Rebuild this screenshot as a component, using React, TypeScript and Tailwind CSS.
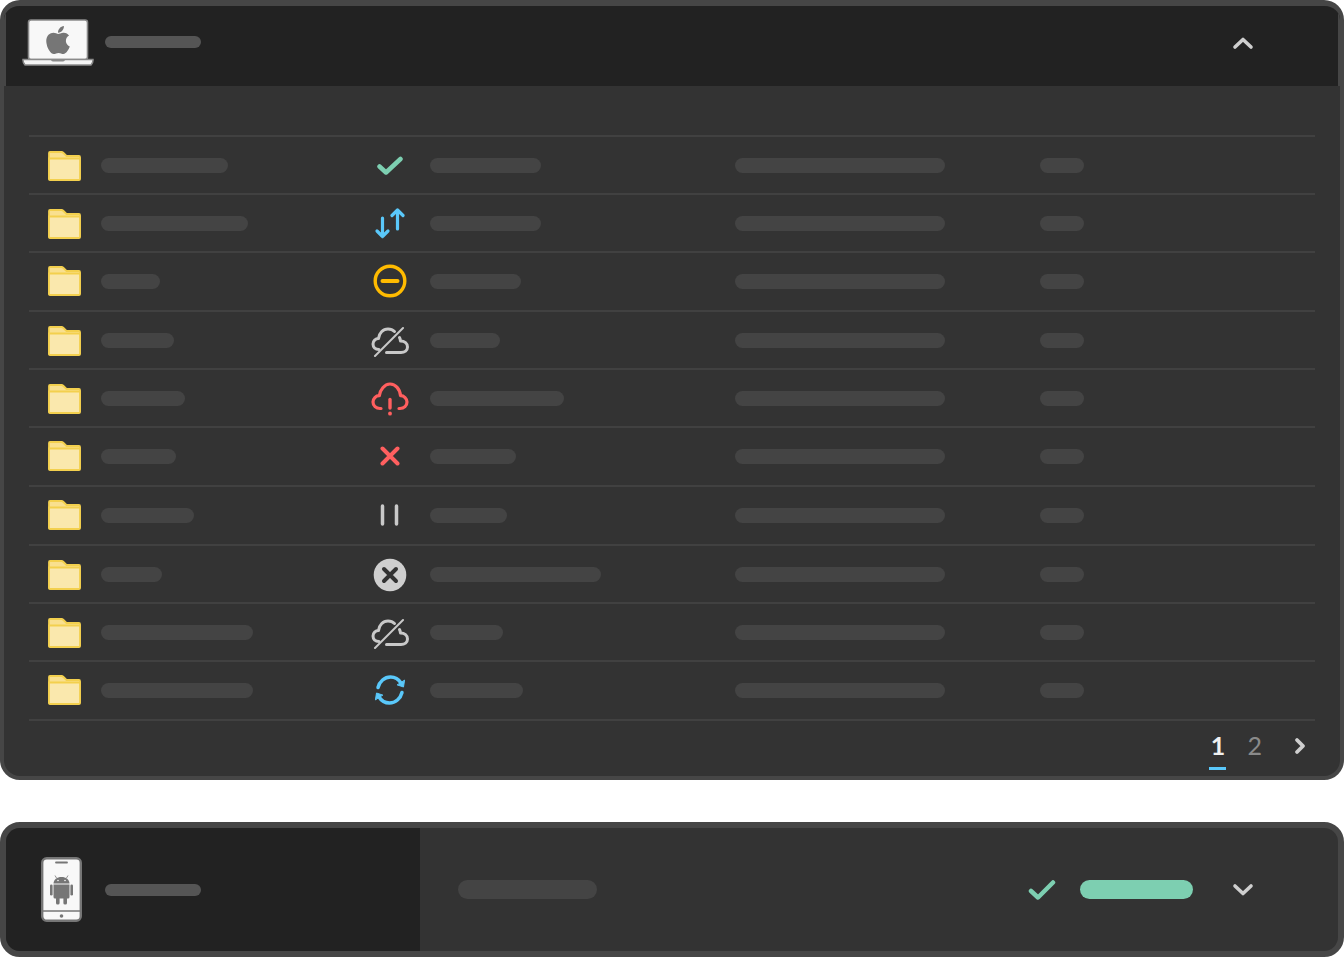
import React from "react";
import { FaApple } from "react-icons/fa";

const FolderIcon = () => (
  <svg width="33" height="30" viewBox="0 0 33 30" className="shrink-0">
    <path d="M1 27V2q0-1 1-1h11.500q1 0 2 1l3 3h12.500q1 0 1 1v21q0 1-1 1h-29q-1.500 0-1.500-1z" fill="#f9e08f" stroke="#f3d04e" strokeWidth="1.800" />
    <path d="M1 7.500h31v20.500q0 1-1 1h-29q-1 0-1-1z" fill="#fae8ad" stroke="#f3d04e" strokeWidth="1.800" />
  </svg>
);

const CloudOff = () => (
  <svg width="38" height="32" viewBox="0 0 38 32" fill="none" stroke="#c9c9c9" strokeWidth="3" strokeLinecap="round" strokeLinejoin="round">
    <path d="M8 24.500C4 24.500 2 22 2 19C2 16 4.500 13.500 7.500 13.500C8 8 12 4 17 4C19.500 4 22 5 23.500 6.500" />
    <path d="M28.500 12.500C29 13.500 29.300 14.500 29.500 16C33.500 16 36.500 18.500 36.500 22C36.500 25.500 33.500 27.500 30 27.500H15.500" />
    <path d="M32 3L4 31" strokeWidth="2" />
  </svg>
);

const StatusIcon = ({ kind }: { kind: string }) => {
  if (kind === "check") {
    return (
      <svg width="26" height="20" viewBox="0 0 26 20" fill="none" stroke="#7dcfb1" strokeWidth="4.500" strokeLinecap="round" strokeLinejoin="round">
        <path d="M2.500 10.500L9 16.500L23.500 3" />
      </svg>
    );
  }
  if (kind === "arrows") {
    return (
      <svg width="32" height="32" viewBox="0 0 32 32" fill="none" stroke="#5ac8fa" strokeWidth="3.200" strokeLinecap="round" strokeLinejoin="round">
        <path d="M8.500 10v18.500M3 23L8.500 28.500L14 23" />
        <path d="M23.500 2v19M18 7.500L23.500 2L29 7.500" />
      </svg>
    );
  }
  if (kind === "minus") {
    return (
      <svg width="34" height="34" viewBox="0 0 34 34" fill="none" stroke="#ffbb00" strokeWidth="3.400" strokeLinecap="round">
        <circle cx="17" cy="17" r="14.800" />
        <path d="M9.500 17h15" strokeWidth="4" />
      </svg>
    );
  }
  if (kind === "cloudoff") return <CloudOff />;
  if (kind === "cloudalert") {
    return (
      <svg width="38" height="34" viewBox="0 0 38 34" fill="none" stroke="#ff5f5f" strokeWidth="3.200" strokeLinecap="round" strokeLinejoin="round">
        <path d="M10 26.500H9c-4 0-7-2.800-7-6.500 0-3.500 2.800-6.300 6.300-6.300C9 8 13.500 2 19 2c5.500 0 10 5 10.500 11.700 3.500 0 6.500 2.800 6.500 6.300 0 3.700-3 6.500-7 6.500h-1" />
        <path d="M19 17.500v8.500" strokeWidth="3.400" />
        <path d="M19 31.500v.2" strokeWidth="3.800" />
      </svg>
    );
  }
  if (kind === "x") {
    return (
      <svg width="20" height="20" viewBox="0 0 20 20" fill="none" stroke="#ff5f5f" strokeWidth="4" strokeLinecap="round">
        <path d="M2.500 2.500L17.500 17.500M17.500 2.500L2.500 17.500" />
      </svg>
    );
  }
  if (kind === "pause") {
    return (
      <svg width="20" height="22" viewBox="0 0 20 22" fill="none" stroke="#c9c9c9" strokeWidth="3.500" strokeLinecap="round">
        <path d="M2.500 2v18M16.500 2v18" />
      </svg>
    );
  }
  if (kind === "xcircle") {
    return (
      <svg width="34" height="34" viewBox="0 0 34 34" fill="none">
        <circle cx="17" cy="17" r="16.300" fill="#cfcfcf" />
        <path d="M11 11L23 23M23 11L11 23" stroke="#333333" strokeWidth="4" strokeLinecap="round" />
      </svg>
    );
  }
  return (
    <svg width="32" height="32" viewBox="0 0 32 32" fill="none" stroke="#5ac8fa" strokeWidth="3.500" strokeLinecap="round" strokeLinejoin="round">
      <path d="M4 13.500C5.500 7.500 10.500 3 16.500 3c4.500 0 8 2 10.500 6" />
      <path d="M28 18.500C26.500 24.500 21.500 29 15.500 29c-4.500 0-8-2-10.500-6" />
      <path d="M30.500 6.500L29.500 13L23.500 11z" fill="#5ac8fa" strokeWidth="1" />
      <path d="M1.500 25.500L2.500 19L8.500 21z" fill="#5ac8fa" strokeWidth="1" />
    </svg>
  );
};

const LaptopIcon = () => (
  <svg width="72" height="47" viewBox="0 0 72 47" className="shrink-0">
    <rect x="6.500" y="1" width="59" height="39.500" rx="2.500" fill="#f8f8f8" stroke="#8a8a8a" strokeWidth="1.600" />
    <path d="M1 40.500h70q.3 3-2 5.500H3q-2.300-2.500-2-5.500z" fill="#f5f5f5" stroke="#8a8a8a" strokeWidth="1.500" />
    <path d="M29 40.500h14q0 2-2 2H31q-2 0-2-2z" fill="#8a8a8a" />
  </svg>
);

const PhoneIcon = () => (
  <svg width="41" height="65" viewBox="0 0 41 65" className="shrink-0">
    <rect x="1.200" y="1.200" width="38.600" height="62.600" rx="4.500" fill="#f8f8f8" stroke="#767676" strokeWidth="2.400" />
    <path d="M1.500 54h38" stroke="#767676" strokeWidth="1.600" />
    <path d="M15 5.500h11" stroke="#767676" strokeWidth="1.800" strokeLinecap="round" />
    <circle cx="20.500" cy="59" r="1.800" fill="#767676" />
    {/* android */}
    <g fill="#767676">
      <path d="M12.500 26.500c0-3.800 3.500-6.500 8-6.500s8 2.700 8 6.500z" />
      <path d="M12.500 27.500h16v12.500q0 1.500-1.500 1.500h-13q-1.500 0-1.500-1.500z" />
      <rect x="9" y="27.500" width="2.600" height="11" rx="1.300" />
      <rect x="29.400" y="27.500" width="2.600" height="11" rx="1.300" />
      <rect x="15" y="40" width="3.600" height="7.500" rx="1.600" />
      <rect x="22.400" y="40" width="3.600" height="7.500" rx="1.600" />
    </g>
    <path d="M15.500 21L14 18.500M25.500 21L27 18.500" stroke="#767676" strokeWidth=".8" />
    <circle cx="17" cy="23.500" r=".8" fill="#f8f8f8" />
    <circle cx="24" cy="23.500" r=".8" fill="#f8f8f8" />
  </svg>
);

const rows = [
  { h: "h-[58px] pt-px", nameW: "w-[127px]", icon: "check", statusW: "w-[111px]" },
  { h: "h-[58px] pt-px", nameW: "w-[147px]", icon: "arrows", statusW: "w-[111px]" },
  { h: "h-[59px] pb-px", nameW: "w-[59px]", icon: "minus", statusW: "w-[91px]" },
  { h: "h-[58px] pt-px", nameW: "w-[73px]", icon: "cloudoff", statusW: "w-[70px]" },
  { h: "h-[58px] pt-px", nameW: "w-[84px]", icon: "cloudalert", statusW: "w-[134px]" },
  { h: "h-[59px] pb-px", nameW: "w-[75px]", icon: "x", statusW: "w-[86px]" },
  { h: "h-[59px] pb-px", nameW: "w-[93px]", icon: "pause", statusW: "w-[77px]" },
  { h: "h-[58px] pt-px", nameW: "w-[61px]", icon: "xcircle", statusW: "w-[171px]" },
  { h: "h-[58px] pt-px", nameW: "w-[152px]", icon: "cloudoff", statusW: "w-[73px]" },
  { h: "h-[59px] pb-px", nameW: "w-[152px]", icon: "sync", statusW: "w-[93px]" },
];

const Bar = ({ className }: { className: string }) => (
  <div className={`h-[15px] rounded-full bg-[#444444] ${className}`} />
);

export default function App() {
  return (
    <div className="bg-white font-['Lato',sans-serif]">
      {/* Panel desktop */}
      <section className="h-[780px] overflow-hidden rounded-[20px] border-x-4 border-t-[6px] border-b-4 border-[#464646] bg-[#333333]">
        <header className="flex h-[80px] items-center border-x-2 border-[#464646] bg-[#222222] pb-[8px] pl-4 pr-[84px]">
          <div className="relative">
            <LaptopIcon />
            <FaApple className="absolute left-[20px] top-[5px] text-[32px] text-[#767676]" />
          </div>
          <div className="ml-[11px] h-3 w-24 rounded-full bg-[#555555]" />
          <svg width="22" height="14" viewBox="0 0 22 14" fill="none" stroke="#cfcfcf" strokeWidth="3.600" strokeLinecap="round" strokeLinejoin="round" className="ml-auto mt-[2px]">
            <path d="M3 11L11 3.500L19 11" />
          </svg>
        </header>

        <div className="px-[25px] pt-[49px]">
          <div className="border-t-2 border-[#414141]">
            {rows.map((row, i) => (
              <div key={i} className={`flex items-center border-b-2 border-[#414141] ${row.h}`}>
                <div className="flex w-[323px] items-center pl-[19px]">
                  <FolderIcon />
                  <Bar className={`ml-5 ${row.nameW}`} />
                </div>
                <div className="flex w-[75px] items-center justify-center">
                  <StatusIcon kind={row.icon} />
                </div>
                <div className="ml-[3px] w-[305px]">
                  <Bar className={row.statusW} />
                </div>
                <Bar className="w-[210px]" />
                <Bar className="ml-[95px] w-[44px]" />
              </div>
            ))}
          </div>
          <div className="flex h-[50px] items-start justify-end pr-2 text-[25px] leading-none">
            <div className="mt-[12px] flex flex-col items-center">
              <span className="font-bold text-[#f0f0f0]">1</span>
              <span className="mt-[9px] h-[3px] w-[17px] bg-[#5ac8fa]" />
            </div>
            <span className="ml-[21px] mt-[12px] text-[#8a8a8a]">2</span>
            <svg width="14" height="18" viewBox="0 0 14 18" fill="none" stroke="#cfcfcf" strokeWidth="3.800" strokeLinecap="round" strokeLinejoin="round" className="ml-[31px] mt-[16px]">
              <path d="M4 3L10 9L4 15" />
            </svg>
          </div>
        </div>
      </section>

      {/* Panel mobile */}
      <section className="mt-[42px] flex h-[135px] overflow-hidden rounded-[20px] border-[6px] border-[#464646] bg-[#333333]">
        <div className="flex w-[414px] items-center bg-[#222222] pl-[35px]">
          <PhoneIcon />
          <div className="ml-[23px] h-3 w-24 rounded-full bg-[#555555]" />
        </div>
        <div className="flex flex-1 items-center pl-[38px] pr-[84px]">
          <div className="h-[19px] w-[139px] rounded-full bg-[#444444]" />
          <svg width="28" height="22" viewBox="0 0 28 22" fill="none" stroke="#7dcfb1" strokeWidth="4.500" strokeLinecap="round" strokeLinejoin="round" className="ml-auto">
            <path d="M3 12L10 18.500L25 3.500" />
          </svg>
          <div className="ml-[24px] h-[19px] w-[113px] rounded-full bg-[#7dcfb1]" />
          <svg width="22" height="14" viewBox="0 0 22 14" fill="none" stroke="#cfcfcf" strokeWidth="3.600" strokeLinecap="round" strokeLinejoin="round" className="ml-[39px]">
            <path d="M3 3L11 10.500L19 3" />
          </svg>
        </div>
      </section>
    </div>
  );
}
